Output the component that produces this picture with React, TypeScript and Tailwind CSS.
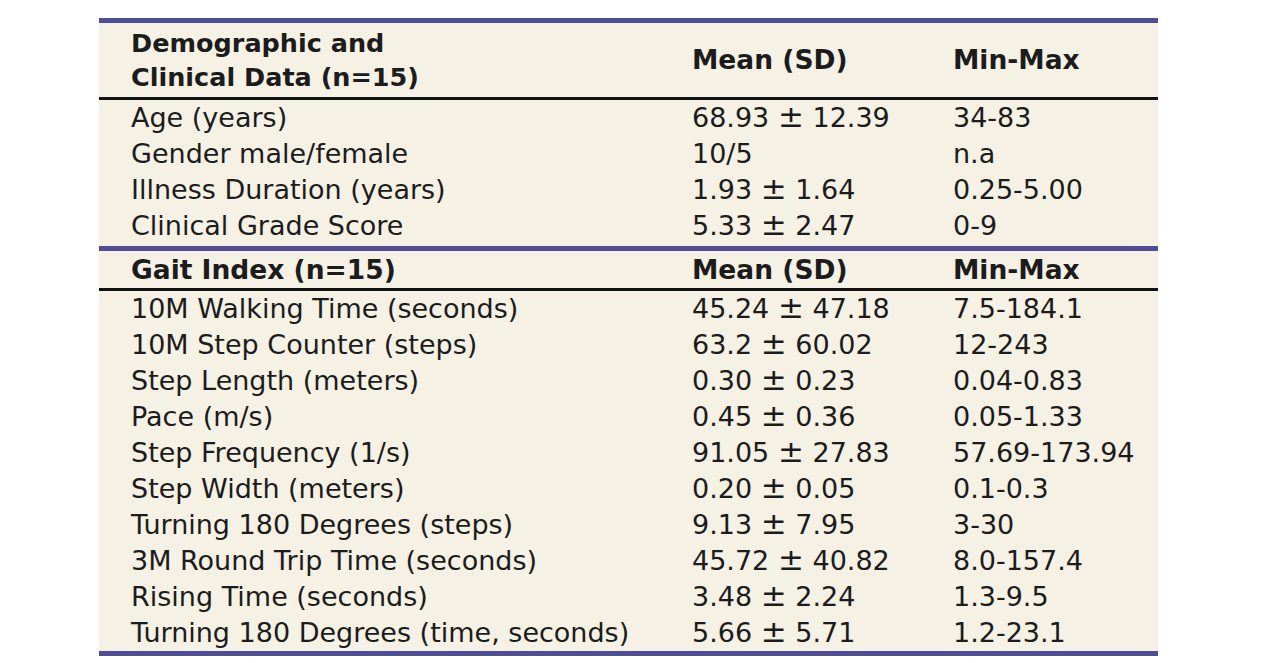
const demographics = [
  ["Age (years)", "68.93 ± 12.39", "34-83"],
  ["Gender male/female", "10/5", "n.a"],
  ["Illness Duration (years)", "1.93 ± 1.64", "0.25-5.00"],
  ["Clinical Grade Score", "5.33 ± 2.47", "0-9"],
];

const gait = [
  ["10M Walking Time (seconds)", "45.24 ± 47.18", "7.5-184.1"],
  ["10M Step Counter (steps)", "63.2 ± 60.02", "12-243"],
  ["Step Length (meters)", "0.30 ± 0.23", "0.04-0.83"],
  ["Pace (m/s)", "0.45 ± 0.36", "0.05-1.33"],
  ["Step Frequency (1/s)", "91.05 ± 27.83", "57.69-173.94"],
  ["Step Width (meters)", "0.20 ± 0.05", "0.1-0.3"],
  ["Turning 180 Degrees (steps)", "9.13 ± 7.95", "3-30"],
  ["3M Round Trip Time (seconds)", "45.72 ± 40.82", "8.0-157.4"],
  ["Rising Time (seconds)", "3.48 ± 2.24", "1.3-9.5"],
  ["Turning 180 Degrees (time, seconds)", "5.66 ± 5.71", "1.2-23.1"],
];

// mean ± sd, the sign drawn a bit bigger like the math-mode one
function Value({ text }: { text: string }) {
  const parts = text.split(" ± ");
  if (parts.length < 2) return <>{text}</>;
  return (
    <>
      {parts[0]}{" "}
      <span className="text-[31px] leading-[0]">±</span>{" "}
      {parts[1]}
    </>
  );
}

function Row({ cells }: { cells: string[] }) {
  return (
    <div className="grid grid-cols-[561px_261px_1fr] h-[36px] items-center pl-[32px]">
      <div className="whitespace-nowrap">{cells[0]}</div>
      <div className="whitespace-nowrap">
        <Value text={cells[1]} />
      </div>
      <div className="whitespace-nowrap">{cells[2]}</div>
    </div>
  );
}

export default function App() {
  return (
    <div className="w-[1268px] h-[663px] bg-white overflow-hidden">
      <div
        className="ml-[99px] mt-[18px] w-[1059px] bg-[#f5f1e5] text-[#1c1c1c] text-[27px] leading-[34px]"
        style={{ fontFamily: '"DejaVu Sans", sans-serif' }}
      >
        <div className="h-[5px] bg-[#4e4d95]" />
        {/* first block header */}
        <div className="grid grid-cols-[561px_261px_1fr] h-[74px] items-center pl-[32px] font-bold text-[26.5px]">
          <div className="leading-[34px] text-[25.5px]">
            Demographic and
            <br />
            Clinical Data (n=15)
          </div>
          <div>Mean (SD)</div>
          <div>Min-Max</div>
        </div>
        <div className="h-[3px] bg-[#111]" />
        <div className="pb-[2px]">
          {demographics.map((r, i) => (
            <Row key={i} cells={r} />
          ))}
        </div>
        <div className="h-[5px] bg-[#4e4d95]" />
        {/* gait block */}
        <div className="grid grid-cols-[561px_261px_1fr] h-[37px] items-center pl-[32px] font-bold text-[26.5px]">
          <div>Gait Index (n=15)</div>
          <div>Mean (SD)</div>
          <div>Min-Max</div>
        </div>
        <div className="h-[3px] bg-[#111]" />
        <div>
          {gait.map((r, i) => (
            <Row key={i} cells={r} />
          ))}
        </div>
        <div className="h-[5px] bg-[#4e4d95]" />
      </div>
    </div>
  );
}
